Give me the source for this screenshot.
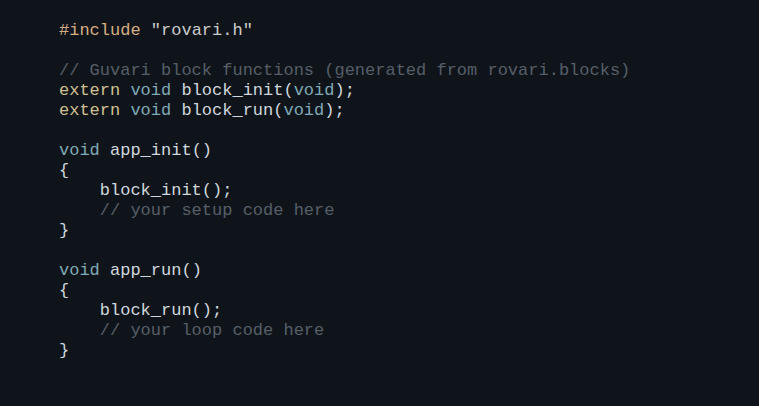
const kw = "text-[#cfc092]";
const ty = "text-[#80aab6]";
const id = "text-[#d0d7de]";
const cm = "text-[#565f68]";
const pp = "text-[#d6ad82]";
const st = "text-[#cccccc]";

type Tok = [string, string];

const lines: Tok[][] = [
  [[pp, "#include"], [st, " \"rovari.h\""]],
  [],
  [[cm, "// Guvari block functions (generated from rovari.blocks)"]],
  [[kw, "extern"], [id, " "], [ty, "void"], [id, " block_init("], [ty, "void"], [id, ");"]],
  [[kw, "extern"], [id, " "], [ty, "void"], [id, " block_run("], [ty, "void"], [id, ");"]],
  [],
  [[ty, "void"], [id, " app_init()"]],
  [[id, "{"]],
  [[id, "    block_init();"]],
  [[cm, "    // your setup code here"]],
  [[id, "}"]],
  [],
  [[ty, "void"], [id, " app_run()"]],
  [[id, "{"]],
  [[id, "    block_run();"]],
  [[cm, "    // your loop code here"]],
  [[id, "}"]],
];

export default function App() {
  return (
    <main className="w-[759px] h-[406px] bg-[#0f141b] overflow-hidden pt-[21px] pl-[59px]">
      <pre className="font-['Liberation_Mono','Courier_New',monospace] text-[17px] leading-[20px] whitespace-pre">
        {lines.map((toks, i) => (
          <div key={i} className="h-[20px]">
            {toks.map(([c, t], j) => (
              <span key={j} className={c}>{t}</span>
            ))}
          </div>
        ))}
      </pre>
    </main>
  );
}
